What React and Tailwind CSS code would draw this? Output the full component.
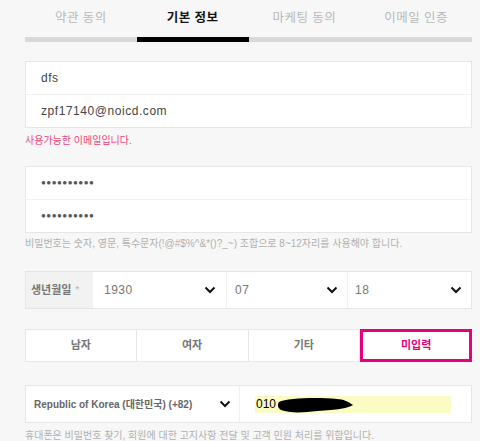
import React from "react";

const font = { fontFamily: '"Liberation Sans", "Noto Sans CJK KR", sans-serif' };

function Chevron() {
  return (
    <svg width="12" height="8" viewBox="0 0 12 8" className="shrink-0">
      <polyline points="1.5,1.5 6,6 10.5,1.5" fill="none" stroke="#111" strokeWidth="2" />
    </svg>
  );
}

export default function App() {
  const tabs = ["약관 동의", "기본 정보", "마케팅 동의", "이메일 인증"];
  return (
    <div className="w-[480px] h-[441px] overflow-hidden bg-[#f7f7f7] pl-[25px] pr-[8px]" style={font}>
      {/* Tabs */}
      <div className="grid grid-cols-4">
        {tabs.map((t, i) => (
          <div key={t} className="flex flex-col">
            <div
              className={
                "h-[37px] flex items-center justify-center text-[12.5px] tracking-[0.5px] pb-[1px] " +
                (i === 1 ? "text-[#111] font-bold" : "text-[#b8b8b8]")
              }
            >
              {t}
            </div>
            <div className={"h-[5px] " + (i === 1 ? "bg-black" : "bg-[#d9d9d9]")} />
          </div>
        ))}
      </div>

      {/* Name / email */}
      <div className="mt-[19px] border border-[#e6e6e6] bg-white">
        <div className="h-[33px] flex items-center pl-[15px] text-[12px] tracking-[0.5px] text-[#444] border-b border-[#f1f1f1]">dfs</div>
        <div className="h-[32px] flex items-center pl-[15px] text-[12px] tracking-[0.55px] text-[#444]">zpf17140@noicd.com</div>
      </div>
      <div className="h-[24px] flex items-center text-[10px] text-[#f0427a]">사용가능한 이메일입니다.</div>

      {/* Passwords */}
      <div className="mt-[14px] border border-[#e6e6e6] bg-white">
        <div className="h-[33px] flex items-center pl-[15px] text-[8px] tracking-[0.5px] text-[#555] border-b border-[#f1f1f1]">●●●●●●●●●●</div>
        <div className="h-[32px] flex items-center pl-[15px] text-[8px] tracking-[0.5px] text-[#555]">●●●●●●●●●●</div>
      </div>
      <div className="h-[20px] flex items-center text-[10px] text-[#b0b0b0]">
        비밀번호는 숫자, 영문, 특수문자(!@#$%^&amp;*()?_~) 조합으로 8~12자리를 사용해야 합니다.
      </div>

      {/* Birth */}
      <div className="mt-[18px] h-[38px] flex border border-[#e6e6e6] bg-white">
        <div className="w-[67px] bg-[#f2f2f2] flex items-center pl-[5px] text-[11px] text-[#777] font-bold">
          생년월일 <span className="ml-[4px] text-[#bbb] text-[9px]">*</span>
        </div>
        <div className="w-[134px] flex items-center justify-between pl-[11px] pr-[10px] text-[12px] tracking-[0.5px] text-[#777] border-r border-[#f1f1f1]">
          <span>1930</span>
          <Chevron />
        </div>
        <div className="w-[121px] flex items-center justify-between pl-[8px] pr-[9px] text-[12px] tracking-[0.5px] text-[#777] border-r border-[#f1f1f1]">
          <span>07</span>
          <Chevron />
        </div>
        <div className="flex-1 flex items-center justify-between pl-[7px] pr-[9px] text-[12px] tracking-[0.5px] text-[#777]">
          <span>18</span>
          <Chevron />
        </div>
      </div>

      {/* Gender */}
      <div className="mt-[20px] h-[33px] grid grid-cols-4 bg-white">
        {["남자", "여자", "기타"].map((g) => (
          <div key={g} className="flex items-center justify-center border border-[#e6e6e6] -ml-px first:ml-0 text-[11px] text-[#777] font-bold">
            {g}
          </div>
        ))}
        <div className="flex items-center justify-center border-[3px] border-[#e5007e] text-[11px] text-[#e5007e] font-bold">
          미입력
        </div>
      </div>

      {/* Phone */}
      <div className="mt-[23px] h-[38px] flex border border-[#e6e6e6] bg-white">
        <div className="w-[214px] flex items-center justify-between pl-[8px] pr-[8px] text-[10px] font-bold text-[#666] border-r border-[#f1f1f1]">
          <span>Republic of Korea (대한민국) (+82)</span>
          <Chevron />
        </div>
        <div className="flex-1 flex items-center pl-[15px]">
          <div className="relative w-[196px] h-[17px] bg-[#fafcc4] flex items-center pl-[1px] text-[12px] text-black">
            010
            <svg className="absolute left-[22px] top-[0px]" width="80" height="19" viewBox="0 0 80 19">
              <path d="M2 6 C10 2, 40 1, 60 3 C66 3, 72 6, 76 9 C72 12, 60 14, 40 15 C25 17, 12 17, 4 14 C1 12, 0 9, 2 6 Z" fill="#000" />
            </svg>
          </div>
        </div>
      </div>
      <div className="h-[24px] flex items-center text-[10px] text-[#b0b0b0]">
        휴대폰은 비밀번호 찾기, 회원에 대한 고지사항 전달 및 고객 민원 처리를 위함입니다.
      </div>
    </div>
  );
}
